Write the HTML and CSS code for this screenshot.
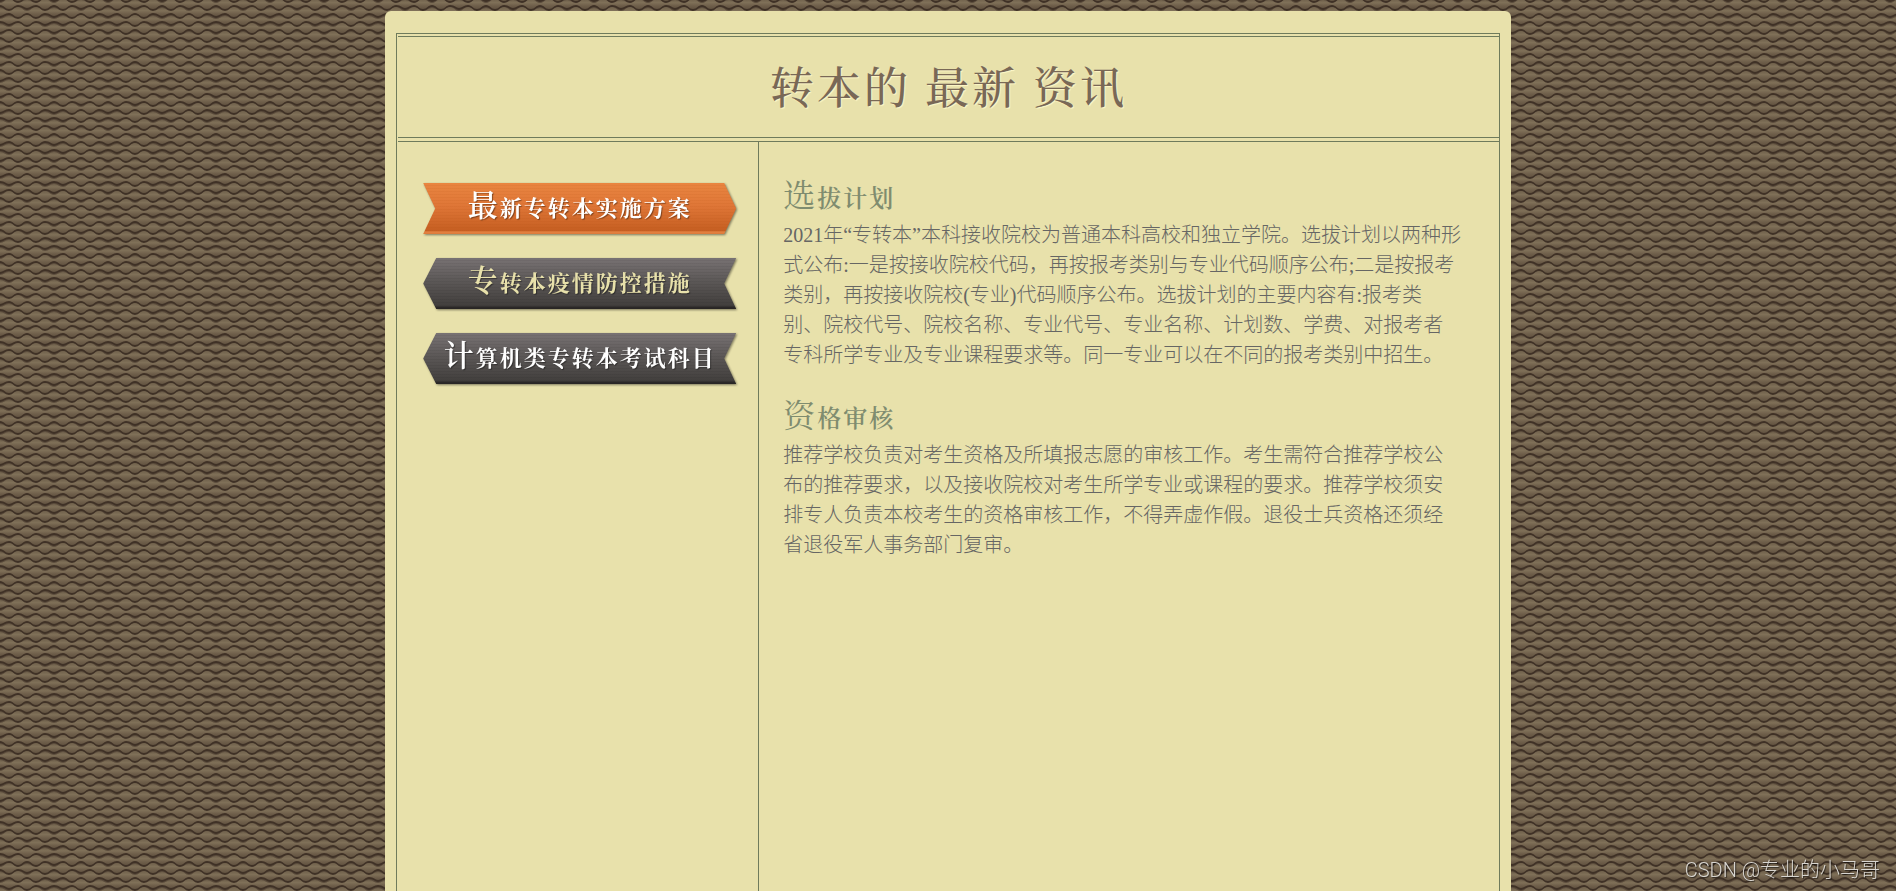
FILE: index.html
```html
<!DOCTYPE html>
<html lang="zh-CN">
<head>
<meta charset="utf-8">
<title>转本的最新资讯</title>
<link rel="stylesheet" href="styles.css">
</head>
<body>
<svg class="texture" aria-hidden="true">
  <defs>
    <linearGradient id="knot" x1="0" y1="0" x2="0" y2="1">
      <stop offset="0" stop-color="#6f604b"/>
      <stop offset="0.35" stop-color="#7f7058"/>
      <stop offset="0.7" stop-color="#6e5e4a"/>
      <stop offset="1" stop-color="#625341"/>
    </linearGradient>
    <path id="large" d="M0 3C4 3 5 -1 9 -1S14 3 18 3V5C14 5 13 9 9 9S4 5 0 5Z"/>
    <path id="small" d="M0 3C4 3 5 0 9 0S14 3 18 3V5C14 5 12 8 9 8S5 5 0 5Z"/>
    <g id="row-a">
      <use href="#large"/>
      <use href="#small" x="18"/>
      <use href="#large" x="36"/>
    </g>
    <g id="row-b">
      <use href="#small" x="-9"/>
      <use href="#large" x="9"/>
      <use href="#large" x="27"/>
      <use href="#small" x="45"/>
    </g>
    <g id="row-c">
      <use href="#small"/>
      <use href="#large" x="18"/>
      <use href="#small" x="36"/>
    </g>
    <pattern id="weave" width="54" height="32" patternUnits="userSpaceOnUse">
      <rect width="54" height="32" fill="#5b4c3c"/>
      <g fill="#3f3126">
        <use href="#row-b" y="-6"/>
        <use href="#row-a" y="2"/>
        <use href="#row-b" y="10"/>
        <use href="#row-c" y="18"/>
        <use href="#row-b" y="26"/>
      </g>
      <g fill="url(#knot)">
        <use href="#row-b" y="-8"/>
        <use href="#row-a"/>
        <use href="#row-b" y="8"/>
        <use href="#row-c" y="16"/>
        <use href="#row-b" y="24"/>
        <use href="#row-a" y="32"/>
      </g>
    </pattern>
  </defs>
  <rect width="100%" height="100%" fill="url(#weave)"/>
</svg>
<div class="page">
  <div class="frame">
    <header class="masthead"><h1>转本的 最新 资讯</h1></header>
    <div class="columns">
      <nav class="menu">
        <div class="item"><a class="ribbon ribbon-active" href="#plan">最新专转本实施方案</a></div>
        <div class="item"><a class="ribbon ribbon-visited" href="#safety">专转本疫情防控措施</a></div>
        <div class="item"><a class="ribbon" href="#subjects">计算机类专转本考试科目</a></div>
      </nav>
      <main class="content">
        <section id="plan">
          <h2>选拔计划</h2>
          <p>2021年“专转本”本科接收院校为普通本科高校和独立学院。选拔计划以两种形<br>式公布:一是按接收院校代码，再按报考类别与专业代码顺序公布;二是按报考<br>类别，再按接收院校(专业)代码顺序公布。选拔计划的主要内容有:报考类<br>别、院校代号、院校名称、专业代号、专业名称、计划数、学费、对报考者<br>专科所学专业及专业课程要求等。同一专业可以在不同的报考类别中招生。</p>
        </section>
        <section>
          <h2>资格审核</h2>
          <p>推荐学校负责对考生资格及所填报志愿的审核工作。考生需符合推荐学校公<br>布的推荐要求，以及接收院校对考生所学专业或课程的要求。推荐学校须安<br>排专人负责本校考生的资格审核工作，不得弄虚作假。退役士兵资格还须经<br>省退役军人事务部门复审。</p>
        </section>
      </main>
    </div>
  </div>
</div>
<div class="watermark">CSDN @专业的小马哥</div>
</body>
</html>
```
FILE: styles.css
```css
* { box-sizing: border-box; }

body {
  margin: 0;
  padding: 11px 10px 0;
  min-height: 100vh;
  display: flex;
  background: #6a5a47;
  font-family: "Liberation Serif", "Noto Serif CJK SC", "Noto Sans CJK SC", serif;
}

.texture {
  position: fixed;
  inset: 0;
  z-index: -1;
  width: 100%;
  height: 100%;
}

.page {
  display: flex;
  width: 60%;
  margin: 0 auto;
  padding: 22px 11px 0;
  border-radius: 6px 6px 0 0;
  background: #e8e1ab;
}

.frame {
  display: flex;
  flex-direction: column;
  width: 100%;
  padding: 2px 0 0 1px;
  border: 1px solid #6f7b5c;
  border-bottom: 0;
}

.masthead {
  padding: 18px 0 12px;
  border: 1px solid #6f7b5c;
  border-width: 1px 0;
  text-align: center;
}

h1 {
  margin: 0;
  font-size: 44px;
  font-weight: 500;
  line-height: 70px;
  letter-spacing: 3px;
  color: #796856;
  text-shadow: 1px 1px 1px #fff8c8;
}

.columns {
  display: flex;
  flex: 1;
  margin-top: 3px;
  border-top: 1px solid #6f7b5c;
}

.menu {
  display: flex;
  flex: 0 0 361px;
  flex-direction: column;
  gap: 24px;
  padding: 41px 22px 0 25px;
  border-right: 1px solid #6f7b5c;
}

.item { filter: drop-shadow(1px 1px 1px #0007); }

.ribbon {
  display: block;
  height: 51px;
  background:
    repeating-linear-gradient(#0000 0 2px, #0000000d 2px 3px),
    linear-gradient(#787273, #5c5857 45%, #423f3d 94%, #2b2827 96%);
  clip-path: polygon(13px 0, 100% 0, calc(100% - 12px) 50%, 100% 100%, 13px 100%, 0 50%);
  color: #fff;
  font-size: 22px;
  font-weight: 700;
  line-height: 46px;
  letter-spacing: 2px;
  text-align: center;
  text-decoration: none;
  text-shadow: 1px 1px 1px #0006;
}

.ribbon-active {
  background:
    repeating-linear-gradient(#0000 0 2px, #a0400012 2px 3px),
    linear-gradient(#e98540, #df7637 45%, #c65f22 93%, #e2803f 96%);
  clip-path: polygon(0 0, calc(100% - 12px) 0, 100% 50%, calc(100% - 12px) 100%, 0 100%, 12px 50%);
}

.ribbon-visited { color: #e8e1ab; }

.ribbon::first-letter { font-size: 30px; font-weight: 600; }

.content {
  flex: 1;
  min-width: 0;
  padding: 34px 0 0 24px;
}

section { margin-bottom: 26px; }

h2 {
  margin: 0;
  color: #7f8c6f;
  font-size: 24px;
  font-weight: 600;
  line-height: 41px;
  letter-spacing: 2px;
}

h2::first-letter { font-size: 32px; font-weight: 400; }

p {
  margin: 0;
  color: #666664;
  font-family: "Liberation Serif", "Noto Sans CJK SC", sans-serif;
  font-size: 20px;
  font-weight: 300;
  line-height: 30px;
}

.watermark {
  position: fixed;
  right: 16px;
  bottom: 8px;
  color: #d8d5d0;
  font-family: Roboto, "Noto Sans CJK SC", sans-serif;
  font-size: 20px;
  font-weight: 300;
  line-height: 26px;
  text-shadow: 1px 1px 1px #0009;
}
```
